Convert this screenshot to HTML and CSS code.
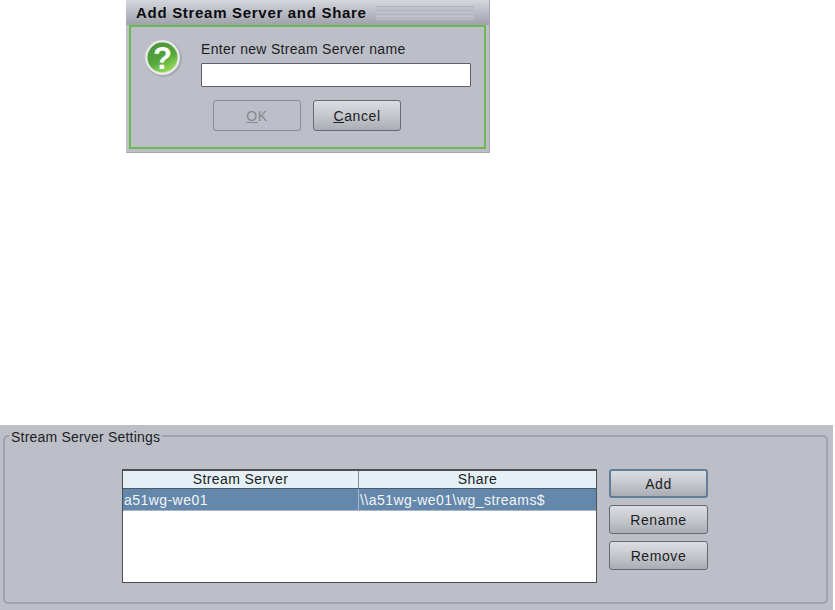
FILE: index.html
```html
<!DOCTYPE html>
<html lang="en">
<head>
<meta charset="utf-8">
<title>Stream Server Settings</title>
<link rel="stylesheet" href="styles.css">
</head>
<body>
<div class="dialog">
  <div class="titlebar">
    <span class="title">Add Stream Server and Share</span>
    <span class="grip"></span>
  </div>
  <div class="dialog-body">
    <div class="prompt">
      <svg class="qicon" width="38" height="38" viewBox="0 0 38 38">
        <defs>
          <linearGradient id="qg" x1="0.25" y1="0" x2="0.75" y2="1">
            <stop offset="0" stop-color="#4a9238"/>
            <stop offset="0.55" stop-color="#55a83c"/>
            <stop offset="1" stop-color="#a2e25e"/>
          </linearGradient>
        </defs>
        <circle cx="19.5" cy="19.5" r="18.5" fill="#8e929a" opacity="0.5"/>
        <circle cx="18.5" cy="18.5" r="17.5" fill="#e6e8e8"/>
        <circle cx="18.5" cy="18.5" r="15" fill="url(#qg)"/>
        <text x="18.5" y="30" text-anchor="middle" class="qmark">?</text>
      </svg>
      <div class="prompt-main">
        <label class="prompt-label" for="name">Enter new Stream Server name</label>
        <input class="name-input" id="name" type="text">
      </div>
    </div>
    <div class="dialog-actions">
      <button class="btn btn-dlg" disabled><u>O</u>K</button>
      <button class="btn btn-dlg"><u>C</u>ancel</button>
    </div>
  </div>
</div>

<div class="panel">
  <fieldset class="group">
    <legend class="group-legend">Stream Server Settings</legend>
    <div class="group-content">
      <div class="table">
        <div class="row head">
          <div class="cell">Stream Server</div>
          <div class="cell">Share</div>
        </div>
        <div class="row selected">
          <div class="cell">a51wg-we01</div>
          <div class="cell">\\a51wg-we01\wg_streams$</div>
        </div>
      </div>
      <div class="side-actions">
        <button class="btn btn-side btn-focus">Add</button>
        <button class="btn btn-side">Rename</button>
        <button class="btn btn-side">Remove</button>
      </div>
    </div>
  </fieldset>
</div>
</body>
</html>
```
FILE: styles.css
```css
* { box-sizing: border-box; }
html, body { margin: 0; padding: 0; background: #fff; }
body {
  width: 835px;
  height: 610px;
  overflow: hidden;
  font-family: "Liberation Sans", Arial, sans-serif;
  font-size: 14px;
  color: #1c1e22;
  display: flex;
  flex-direction: column;
}
.dialog {
  width: 364px;
  height: 153px;
  margin-left: 126px;
  background: #bcbfc8;
  padding: 0 3px 3px 3px;
  display: flex;
  flex-direction: column;
  border-right: 1px solid #a4a7b0;
  border-bottom: 1px solid #a4a7b0;
}
.titlebar {
  height: 25px;
  flex: none;
  margin: 0 -3px;
  padding: 0 15px 0 10px;
  display: flex;
  align-items: center;
  gap: 9px;
  background: linear-gradient(#d4d6dc, #bcbfc8 45%, #9fa2ab);
}
.title { font-weight: bold; font-size: 15px; letter-spacing: 0.7px; color: #0c0c0e; white-space: nowrap; }
.grip {
  flex: 1;
  height: 14px;
  background: repeating-linear-gradient(#b0b3bc 0, #b0b3bc 1px, #bfc1ca 1px, #bfc1ca 4px);
}
.dialog-body {
  flex: 1;
  border: 2px solid #6bb94f;
  padding: 12px 16px 0 13px;
}
.prompt { display: flex; gap: 19px; }
.qicon { flex: none; }
.qmark { font-family: "Liberation Sans", Arial, sans-serif; font-weight: bold; font-size: 31px; fill: #fff; }
.prompt-main { flex: 1; display: flex; flex-direction: column; padding-top: 2px; }
.prompt-label { line-height: 16px; letter-spacing: 0.3px; }
.name-input {
  margin-top: 6px;
  height: 24px;
  width: 270px;
  background: #fff;
  border: 1px solid #5e6066;
  border-radius: 1px;
  outline: none;
}
.dialog-actions { display: flex; gap: 12px; margin-top: 13px; padding-left: 69px; }
.btn {
  font-family: "Liberation Sans", Arial, sans-serif;
  font-size: 14px;
  letter-spacing: 0.6px;
  color: #1c1e22;
  border: 1px solid #66696f;
  border-radius: 3px;
  padding: 0;
  background: linear-gradient(#dcdde2, #c8cad0 45%, #aaadb5);
}
.btn-dlg { width: 88px; height: 31px; }
.btn:disabled {
  color: #85888f;
  background: #bcbfc8;
  border-color: #898c93;
}
.btn-side { width: 99px; height: 29px; }
.btn-focus { border: 2px solid #5f7f96; }

.panel {
  margin-top: 272px;
  height: 185px;
  width: 833px;
  background: #bcbfc8;
  padding: 2px 5px 6px 3px;
  display: flex;
}
.group {
  flex: 1;
  margin: 0;
  min-width: 0;
  border: 2px solid #a0a3ac;
  border-radius: 5px;
  padding: 0;
}
.group-legend {
  margin-left: 4px;
  padding: 2px 2px 0 2px;
  line-height: 16px;
  letter-spacing: 0.2px;
}
.group-content {
  display: flex;
  align-items: flex-start;
  gap: 12px;
  padding: 24px 0 0 117px;
}
.table {
  width: 475px;
  height: 114px;
  background: #fff;
  border: 1px solid #4c4e52;
  border-top-width: 2px;
  flex: none;
}
.row { display: grid; grid-template-columns: 236px 1fr; }
.head {
  height: 18px;
  background: #e5f0f6;
  border-bottom: 1px solid #4c5a66;
}
.head .cell { text-align: center; line-height: 17px; letter-spacing: 0.4px; }
.head .cell:first-child { border-right: 1px solid #8a8d94; }
.selected {
  height: 22px;
  background: #6488ab;
  color: #f2f4f6;
  border-bottom: 1px solid #aab4c4;
}
.selected .cell { line-height: 22px; padding-left: 1px; letter-spacing: 0.45px; }
.selected .cell:first-child { border-right: 1px solid #a8b8c8; }
.side-actions { display: flex; flex-direction: column; gap: 7px; }
```
